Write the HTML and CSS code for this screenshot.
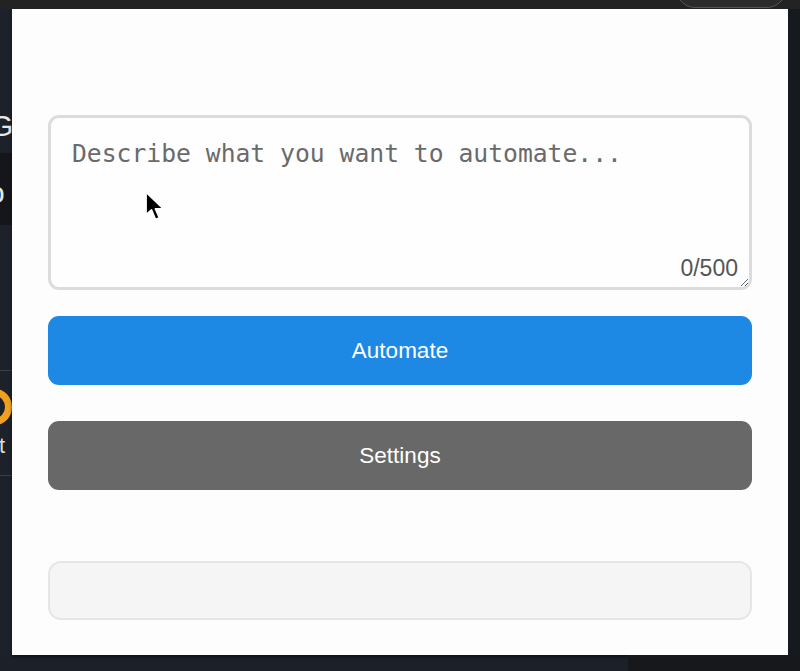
FILE: index.html
```html
<!DOCTYPE html>
<html lang="en">
<head>
<meta charset="utf-8">
<title>Automate</title>
<link rel="stylesheet" href="styles.css">
</head>
<body>
<div class="topbar"><div class="tab"></div></div>
<div class="stage">
  <div class="side-left">
    <div class="sl-g">G</div>
    <div class="sl-band">o</div>
    <div class="sl-gap"></div>
    <div class="sl-line"></div>
    <div class="sl-logo"></div>
    <div class="sl-t">t</div>
    <div class="sl-line2"></div>
  </div>
  <div class="panel">
    <div class="input-wrap">
      <textarea class="prompt" placeholder="Describe what you want to automate..." maxlength="500"></textarea>
      <span class="counter">0/500</span>
    </div>
    <button class="btn btn-primary">Automate</button>
    <button class="btn btn-secondary">Settings</button>
    <div class="status"></div>
  </div>
  <div class="side-right"></div>
</div>
<div class="bottom"><div class="bottom-right"></div></div>
<svg class="cursor" width="24" height="34" viewBox="0 0 24 34">
  <path d="M2 2 L2 25 L7.5 20 L11.5 29.5 L15.5 27.8 L11.5 18.8 L19.5 18.8 Z" fill="#000" stroke="#fff" stroke-width="1.8" stroke-linejoin="round"/>
</svg>
</body>
</html>
```
FILE: styles.css
```css
* { box-sizing: border-box; }
html, body {
  margin: 0;
  padding: 0;
  width: 800px;
  height: 671px;
  overflow: hidden;
  background: #1c2029;
  font-family: "Liberation Sans", Arial, sans-serif;
}
.topbar {
  height: 9px;
  background: #232323;
  position: relative;
  overflow: hidden;
}
.tab {
  position: absolute;
  left: 676px;
  top: -30px;
  width: 110px;
  height: 38px;
  border: 1.5px solid #555;
  border-radius: 19px;
  background: #2b2b2b;
}
.stage {
  display: flex;
  height: 646px;
}
.side-left {
  width: 12px;
  background: #1d2129;
  overflow: hidden;
  display: flex;
  flex-direction: column;
  color: #e8e8e8;
  font-size: 30px;
}
.sl-g {
  height: 144px;
  padding-top: 97px;
  margin-left: -10px;
  line-height: 40px;
}
.sl-band {
  height: 72px;
  background: #14161a;
  margin-left: -12px;
  line-height: 80px;
}
.sl-gap { height: 145px; flex-shrink: 0; }
.sl-line { height: 1px; background: #3a3e46; flex-shrink: 0; }
.sl-logo {
  flex-shrink: 0;
  height: 36px;
  margin-top: 18px;
  margin-left: -22px;
  width: 34px;
  border: 7px solid #f0a020;
  border-radius: 50%;
}
.sl-t {
  flex-shrink: 0;
  margin-left: -1px;
  margin-top: 6px;
  font-size: 22px;
  line-height: 30px;
  color: #ddd;
}
.sl-line2 { flex-shrink: 0; margin-top: 14px; height: 1px; background: #3a3e46; }
.side-right {
  width: 12px;
  background: #16191e;
}
.panel {
  width: 776px;
  background: #fdfdfe;
  padding: 106px 36px 0 36px;
  display: flex;
  flex-direction: column;
  box-shadow: 0 2px 3px rgba(0,0,0,0.5);
}
.input-wrap {
  position: relative;
  height: 175px;
}
.prompt {
  display: block;
  width: 100%;
  height: 175px;
  border: 3px solid #dcdcdc;
  border-radius: 11px;
  background: #fefefe;
  padding: 20px 21px;
  font-family: "DejaVu Sans Mono", monospace;
  font-size: 24.7px;
  line-height: 32px;
  color: #333;
  resize: vertical;
  outline: none;
}
.prompt::placeholder { color: #6a6a6a; }
.counter {
  position: absolute;
  right: 14px;
  bottom: 9px;
  font-size: 23px;
  color: #555;
  line-height: 26px;
}
.btn {
  display: block;
  width: 100%;
  height: 69px;
  border: none;
  border-radius: 11px;
  color: #fff;
  font-family: "Liberation Sans", Arial, sans-serif;
  font-size: 22.5px;
  padding: 0;
}
.btn-primary {
  background: #1e88e5;
  margin-top: 26px;
}
.btn-secondary {
  background: #686868;
  margin-top: 36px;
}
.status {
  margin-top: 71px;
  height: 59px;
  background: #f5f5f6;
  border: 2px solid #e6e6e8;
  border-radius: 13px;
}
.bottom {
  height: 16px;
  display: flex;
  justify-content: flex-end;
}
.bottom-right {
  width: 172px;
  background: #16181c;
}
.cursor {
  position: absolute;
  left: 144px;
  top: 190px;
}
```
